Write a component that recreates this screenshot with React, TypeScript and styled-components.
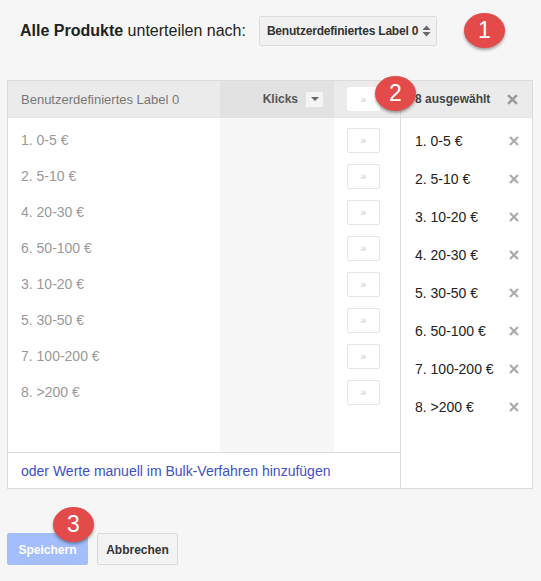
import React from "react";
import styled, { createGlobalStyle } from "styled-components";

const Global = createGlobalStyle`
  html, body { margin: 0; padding: 0; background: #f6f6f6; }
  body { font-family: "Liberation Sans", Arial, sans-serif; color: #222; }
  * { box-sizing: border-box; }
`;

const Page = styled.div`
  width: 541px;
  height: 581px;
  padding: 16px 0 0 7px;
  background: #f6f6f6;
  display: flex;
  flex-direction: column;
`;

const TitleRow = styled.div`
  display: flex;
  align-items: center;
  height: 30px;
  padding-left: 13px;
`;

const Title = styled.div`
  font-size: 16px;
  color: #222;
  white-space: nowrap;
  b { font-weight: bold; }
`;

const Select = styled.div`
  margin-left: 13px;
  width: 178px;
  height: 30px;
  border: 1px solid #dcdcdc;
  border-radius: 2px;
  background: #f1f1f1;
  display: flex;
  align-items: center;
  padding: 0 5px 0 7px;
  font-size: 12px;
  letter-spacing: -0.2px;
  font-weight: bold;
  color: #333;
  white-space: nowrap;
  justify-content: space-between;
`;

const Badge = styled.div`
  width: 41px;
  height: 35px;
  border-radius: 50%;
  background: #e34a4a;
  box-shadow: 0 2px 3px rgba(0, 0, 0, 0.35);
  color: #fff;
  font-size: 23px;
  display: flex;
  align-items: center;
  justify-content: center;
  font-family: "Liberation Sans", Arial, sans-serif;
`;

const TitleBadge = styled(Badge)`
  margin-left: 27px;
  margin-top: -2px;
`;

const OverlayBadge = styled(Badge)<{ $left: number; $top: number }>`
  position: absolute;
  left: ${(p) => p.$left}px;
  top: ${(p) => p.$top}px;
  z-index: 2;
`;

const Panel = styled.div`
  position: relative;
  margin-top: 34px;
  width: 526px;
  height: 409px;
  border: 1px solid #dcdcdc;
  background: #fff;
  display: flex;
`;

const LeftPanel = styled.div`
  width: 393px;
  border-right: 1px solid #dcdcdc;
  display: flex;
  flex-direction: column;
`;

const Cols = styled.div`
  display: grid;
  grid-template-columns: 212px 114px 1fr;
`;

const HeadRow = styled(Cols)`
  height: 37px;
  background: #ebebeb;
  border-bottom: 1px solid #e2e2e2;
`;

const HeadCell = styled.div<{ $dark?: boolean }>`
  display: flex;
  align-items: center;
  padding-left: ${(p) => (p.$dark ? "0" : "13px")};
  justify-content: ${(p) => (p.$dark ? "flex-end" : "flex-start")};
  padding-right: ${(p) => (p.$dark ? "11px" : "0")};
  background: ${(p) => (p.$dark ? "#e2e2e2" : "transparent")};
  font-size: 13px;
  color: #777;
  white-space: nowrap;
`;

const SortLabel = styled.span`
  font-size: 12px;
  font-weight: bold;
  color: #555;
  margin-right: 8px;
`;

const SortButton = styled.div`
  width: 17px;
  height: 15px;
  background: #f4f4f4;
  display: flex;
  align-items: center;
  justify-content: center;
`;

const BodyRow = styled(Cols)`
  flex: 1;
`;

const NameCol = styled.div`
  padding-top: 4px;
  padding-left: 13px;
`;

const NameItem = styled.div`
  height: 36px;
  display: flex;
  align-items: center;
  font-size: 14px;
  color: #999;
`;

const KlicksCol = styled.div`
  background: #f7f7f7;
`;

const MoveCol = styled.div`
  padding-top: 4px;
  padding-left: 13px;
`;

const MoveSlot = styled.div`
  height: 36px;
  display: flex;
  align-items: center;
`;

const MoveCell = styled.div`
  display: flex;
  align-items: center;
  padding-left: 13px;
`;

const MoveButton = styled.div<{ $head?: boolean }>`
  width: 33px;
  height: ${(p) => (p.$head ? 24 : 25)}px;
  border: 1px solid ${(p) => (p.$head ? "#fff" : "#e6e6e6")};
  border-radius: 2px;
  background: #fff;
  display: flex;
  align-items: center;
  justify-content: center;
  font-size: 10px;
  color: #c8c8c8;
`;

const Footer = styled.div`
  height: 36px;
  border-top: 1px solid #dcdcdc;
  display: flex;
  align-items: center;
  padding-left: 13px;
`;

const Link = styled.a`
  font-size: 14px;
  color: #4150c8;
  text-decoration: none;
`;

const RightPanel = styled.div`
  flex: 1;
  display: flex;
  flex-direction: column;
`;

const RightHead = styled.div`
  height: 37px;
  background: #ebebeb;
  border-bottom: 1px solid #e2e2e2;
  display: flex;
  align-items: center;
  padding-left: 14px;
  padding-right: 14px;
  justify-content: space-between;
  font-size: 12px;
  font-weight: bold;
  color: #444;
`;

const RightBody = styled.div`
  padding-top: 4px;
  padding-left: 14px;
  padding-right: 13px;
`;

const RightItem = styled.div`
  height: 38px;
  display: flex;
  align-items: center;
  justify-content: space-between;
  font-size: 14px;
  color: #222;
`;

const ActionRow = styled.div`
  position: relative;
  margin-top: 44px;
  display: flex;
  gap: 9px;
`;

const Button = styled.div<{ $primary?: boolean }>`
  width: 81px;
  height: 32px;
  border-radius: 2px;
  border: 1px solid ${(p) => (p.$primary ? "#a4bdfc" : "#d9d9d9")};
  background: ${(p) => (p.$primary ? "#a4bdfc" : "#f3f3f3")};
  color: ${(p) => (p.$primary ? "#fff" : "#333")};
  font-size: 12px;
  font-weight: bold;
  display: flex;
  align-items: center;
  justify-content: center;
  padding-top: 1px;
`;

const XIcon = ({ size = 10, color = "#aaa" }: { size?: number; color?: string }) => (
  <svg width={size} height={size} viewBox="0 0 10 10">
    <path d="M1 1L9 9M9 1L1 9" stroke={color} strokeWidth="2.2" strokeLinecap="butt" />
  </svg>
);

const SelectArrows = () => (
  <svg width="9" height="12" viewBox="0 0 9 12">
    <path d="M4.5 0.5L8.5 5H0.5Z" fill="#666" />
    <path d="M4.5 11.5L8.5 7H0.5Z" fill="#666" />
  </svg>
);

const Caret = () => (
  <svg width="8" height="4" viewBox="0 0 8 4">
    <path d="M0 0H8L4 4Z" fill="#666" />
  </svg>
);

const leftItems = [
  "1. 0-5 €",
  "2. 5-10 €",
  "4. 20-30 €",
  "6. 50-100 €",
  "3. 10-20 €",
  "5. 30-50 €",
  "7. 100-200 €",
  "8. >200 €",
];

const rightItems = [
  "1. 0-5 €",
  "2. 5-10 €",
  "3. 10-20 €",
  "4. 20-30 €",
  "5. 30-50 €",
  "6. 50-100 €",
  "7. 100-200 €",
  "8. >200 €",
];

export default function App() {
  return (
    <>
      <Global />
      <Page>
        <TitleRow>
          <Title>
            <b>Alle Produkte</b> unterteilen nach:
          </Title>
          <Select>
            <span>Benutzerdefiniertes Label 0</span>
            <SelectArrows />
          </Select>
          <TitleBadge>1</TitleBadge>
        </TitleRow>

        <Panel>
          <OverlayBadge $left={367} $top={-5}>2</OverlayBadge>
          <LeftPanel>
            <HeadRow>
              <HeadCell>Benutzerdefiniertes Label 0</HeadCell>
              <HeadCell $dark>
                <SortLabel>Klicks</SortLabel>
                <SortButton>
                  <Caret />
                </SortButton>
              </HeadCell>
              <MoveCell>
                <MoveButton $head>»</MoveButton>
              </MoveCell>
            </HeadRow>
            <BodyRow>
              <NameCol>
                {leftItems.map((t) => (
                  <NameItem key={t}>{t}</NameItem>
                ))}
              </NameCol>
              <KlicksCol />
              <MoveCol>
                {leftItems.map((t) => (
                  <MoveSlot key={t}>
                    <MoveButton>»</MoveButton>
                  </MoveSlot>
                ))}
              </MoveCol>
            </BodyRow>
            <Footer>
              <Link>oder Werte manuell im Bulk-Verfahren hinzufügen</Link>
            </Footer>
          </LeftPanel>
          <RightPanel>
            <RightHead>
              <span>8 ausgewählt</span>
              <XIcon size={11} color="#999" />
            </RightHead>
            <RightBody>
              {rightItems.map((t) => (
                <RightItem key={t}>
                  <span>{t}</span>
                  <XIcon />
                </RightItem>
              ))}
            </RightBody>
          </RightPanel>
        </Panel>

        <ActionRow>
          <OverlayBadge $left={46} $top={-26}>3</OverlayBadge>
          <Button $primary>Speichern</Button>
          <Button>Abbrechen</Button>
        </ActionRow>
      </Page>
    </>
  );
}
